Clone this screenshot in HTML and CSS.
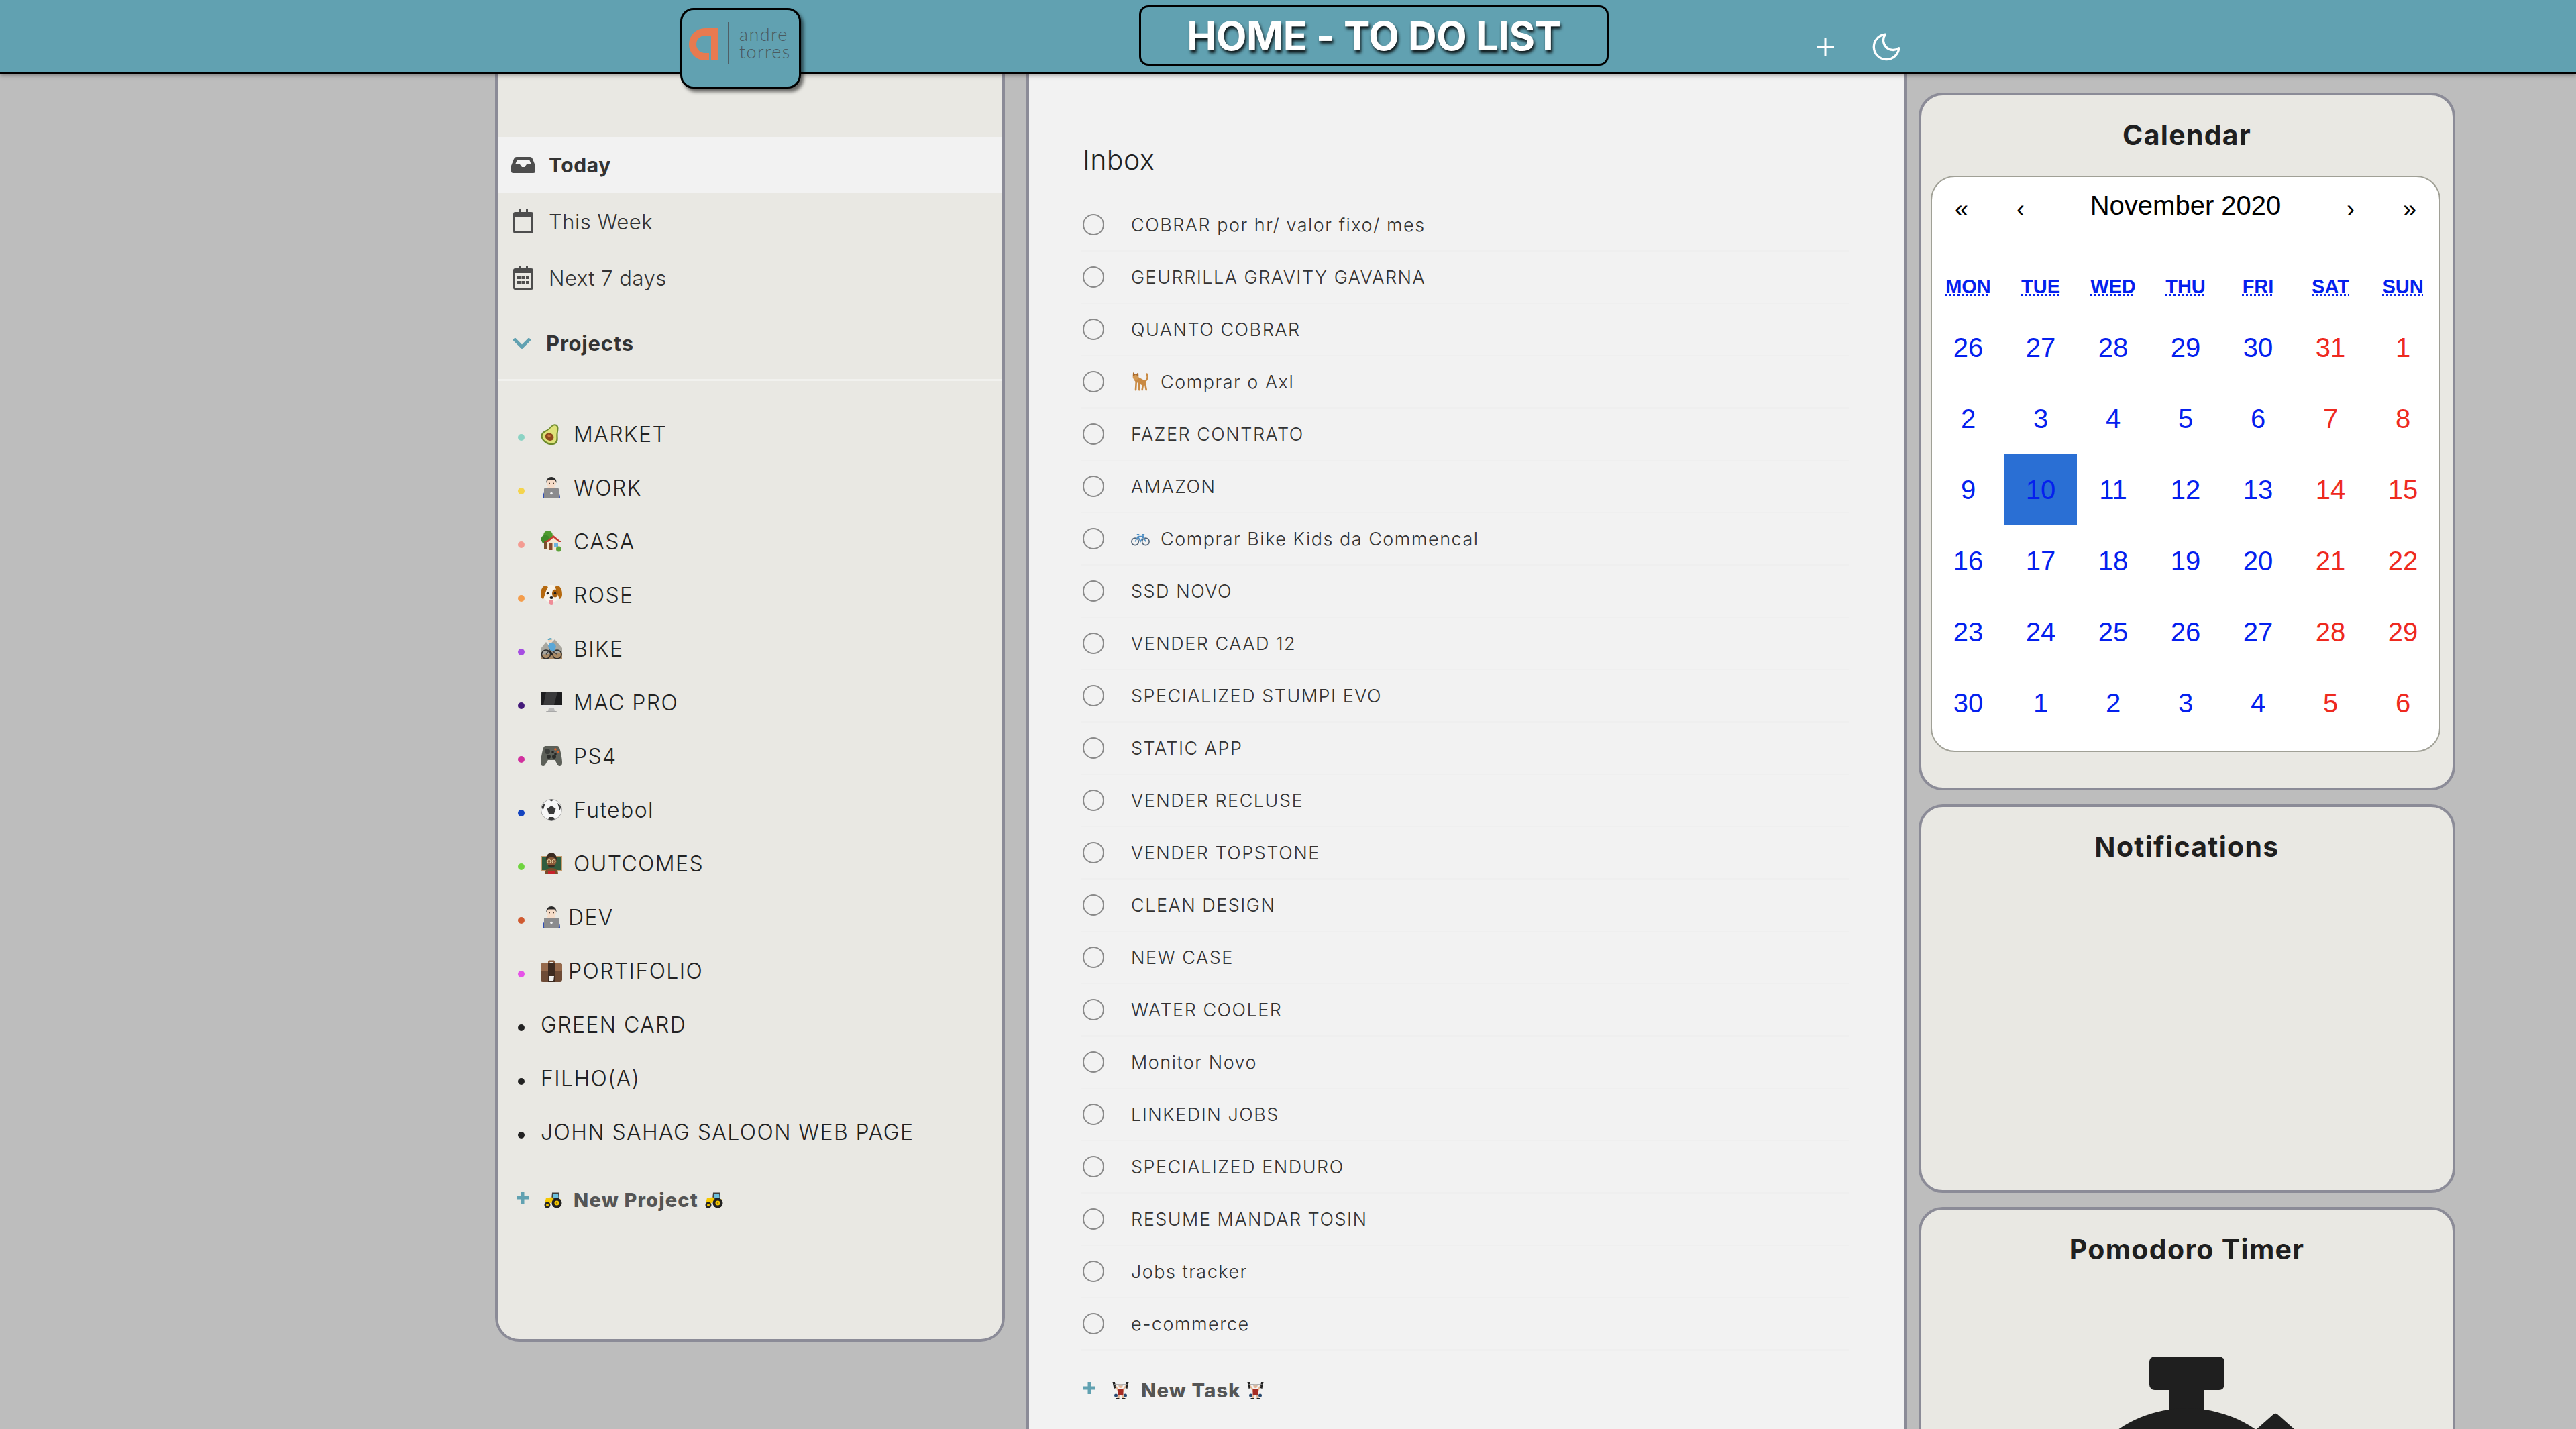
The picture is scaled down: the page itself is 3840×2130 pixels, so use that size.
FILE: index.html
```html
<!DOCTYPE html>
<html lang="en">
<head>
<meta charset="utf-8">
<title>Home - To Do List</title>
<link rel="stylesheet" href="styles.css">
</head>
<body>
<svg class="defs" aria-hidden="true">
  <symbol id="e-avocado" viewBox="0 0 32 32">
    <g transform="rotate(28 16 16) translate(16 16) scale(1.2 1) translate(-16 -16)"><path d="M16 0c4 0 5 5 6.500 10 1.500 5 4.500 8 4.500 12.500C27 28 22 32 16 32S5 28 5 22.500C5 18 8.500 15 10 10 11 5 12 0 16 0z" fill="#6d8a2c"/><path d="M16 2c3 0 4 5 5 9 1.500 5 4 7.500 4 11.500C25 27 21 29.500 16 29.500S7 27 7 22.500C7 18.500 9.500 16 11 11c1-4 2-9 5-9z" fill="#dfe27a"/><circle cx="15.500" cy="21" r="5.500" fill="#8f4a1d"/><circle cx="14.500" cy="20" r="2" fill="#c9783d"/></g>
  </symbol>
  <symbol id="e-tech" viewBox="0 0 32 32">
    <path d="M3 32c0-7 3-12 6-13h14c3 1 6 6 6 13z" fill="#2d4bb5"/>
    <circle cx="16" cy="9" r="7" fill="#f6dcc8"/>
    <path d="M8.500 9C8 3 12 0 16 0s8 3 7.500 9c-1-3-2-4.500-3.500-4.500h-8C10.500 4.500 9.500 6 8.500 9z" fill="#2a2a2a"/>
    <circle cx="13" cy="9.500" r="1" fill="#3a2a20"/><circle cx="19" cy="9.500" r="1" fill="#3a2a20"/>
    <rect x="10" y="15" width="12" height="4" fill="#f6dcc8"/>
    <rect x="5" y="17" width="22" height="15" rx="1" fill="#8b8b8d"/>
    <circle cx="16" cy="24.500" r="1.800" fill="#f2f2f2"/>
  </symbol>
  <symbol id="e-house" viewBox="0 0 32 32">
    <circle cx="11" cy="7" r="7" fill="#4f9a2f"/><circle cx="7" cy="13" r="6.500" fill="#3f8a28"/><rect x="5" y="16" width="4" height="12" fill="#7a4e2a"/>
    <rect x="10" y="16" width="18" height="13" fill="#f5e6cf"/>
    <path d="M7 17 19 7l12 10z" fill="#c7382f"/><path d="M11 17 19 10.500 27 17z" fill="#f5e6cf"/>
    <rect x="12.500" y="19" width="5" height="10" fill="#8a4a2d"/><rect x="20" y="19" width="6" height="5" fill="#6fb4df"/>
    <circle cx="27" cy="27.500" r="4" fill="#5da23a"/>
  </symbol>
  <symbol id="e-dog" viewBox="0 0 32 32">
    <ellipse cx="16" cy="14" rx="13" ry="13" fill="#f7f3ea"/>
    <path d="M7 2C2 3 0 9 0 15c0 4 2 7 4 7 2-4 3-12 7-18z" fill="#b5690f"/>
    <path d="M25 2c5 1 7 7 7 13 0 4-2 7-4 7-2-4-3-12-7-18z" fill="#b5690f"/>
    <ellipse cx="21.500" cy="13.500" rx="4.500" ry="6" fill="#a8600e"/>
    <circle cx="10.500" cy="13.500" r="1.800" fill="#1c1c1c"/><circle cx="21.500" cy="13.500" r="1.800" fill="#1c1c1c"/>
    <ellipse cx="16" cy="20" rx="2.500" ry="2" fill="#1c1c1c"/>
    <path d="M13 24h6v4a3 3 0 0 1-6 0z" fill="#ef8d98"/>
  </symbol>
  <symbol id="e-biker" viewBox="0 0 32 32">
    <path d="M0 32V16L8 6l4 5 9-9 11 13v17z" fill="#a9a79f"/><path d="M0 25l32-3v10H0z" fill="#a98a66"/>
    <circle cx="8" cy="24.500" r="6.500" fill="none" stroke="#2b2b2b" stroke-width="1.500"/><circle cx="24.500" cy="24.500" r="6.500" fill="none" stroke="#2b2b2b" stroke-width="1.500"/>
    <path d="M8 24.500 14 17l10.500 7.500" fill="none" stroke="#444" stroke-width="1.500"/>
    <path d="M13 8c3-2 8-1 10 5l-3 7-6-2-3-6z" fill="#5aa7d8"/><path d="M14 19l3 6" stroke="#222" stroke-width="2.500"/>
    <circle cx="14" cy="3.500" r="3.200" fill="#f2d3b8"/><path d="M10.500 3C11 0 16 -1 18 2z" fill="#38a0c9"/>
  </symbol>
  <symbol id="e-desktop" viewBox="0 0 32 32">
    <rect x="0" y="1" width="32" height="24" rx="1" fill="#e6e6e6"/>
    <path d="M0 1.500C0 1 .5 .5 1 .5h30c.5 0 1 .5 1 1V20H0z" fill="#1d1d1f"/><path d="M8 .5h17L20 20H4z" fill="#3a3a3c"/>
    <path d="M12 25h8l1 4h-10z" fill="#bdbdbd"/><rect x="8" y="29" width="16" height="2" rx="1" fill="#a8a8a8"/>
  </symbol>
  <symbol id="e-pad" viewBox="0 0 32 32">
    <path d="M7 1h18c2 0 3 2 4 6 2 8 3 15 3 19 0 4-2 5-4 5-3 0-5-7-7-9h-10c-2 2-4 9-7 9-2 0-4-1-4-5 0-4 1-11 3-19 1-4 2-6 4-6z" fill="#5d6059"/>
    <circle cx="10" cy="9" r="4" fill="#3b3d3a"/><circle cx="12" cy="17" r="3" fill="#2a2b29"/><circle cx="20" cy="17" r="3" fill="#2a2b29"/>
    <circle cx="22" cy="6" r="1.800" fill="#d9622a"/><circle cx="26" cy="10" r="1.800" fill="#d9622a"/><circle cx="18" cy="10" r="1.800" fill="#252525"/><circle cx="22" cy="13" r="1.800" fill="#252525"/>
  </symbol>
  <symbol id="e-ball" viewBox="0 0 32 32">
    <circle cx="16" cy="16" r="15.500" fill="#f7f7f7" stroke="#a8a8a8"/>
    <path d="M16 10l6.500 4.500-2.500 7.500h-8l-2.500-7.500z" fill="#3a3a3a"/>
    <path d="M12 1 16 3.500 20 1c-2.500-.7-5.500-.7-8 0zM1.500 12l2 5 2.500-8 1-3C4.500 7.500 2.500 9.500 1.500 12zM30.500 12l-2 5-2.500-8-1-3c2.500 1.500 4.500 3.500 5.500 6zM11 30.500l5 1 5-1-2-3.500h-6z" fill="#3a3a3a"/>
  </symbol>
  <symbol id="e-teacher" viewBox="0 0 32 32">
    <rect x="0" y="5" width="32" height="23" fill="#c69c6d"/><rect x="2" y="7" width="28" height="19" fill="#2f5d3f"/>
    <path d="M6 32c0-6 4-9 10-9s10 3 10 9z" fill="#7b4d2a"/><rect x="11" y="27" width="10" height="5" fill="#c8222a"/>
    <circle cx="16" cy="13" r="7.500" fill="#8a5a38"/><path d="M8 12C7 4 12 0 16 0s9 4 8 12c-1-3-3-5-8-5s-7 2-8 5z" fill="#3a2a20"/>
    <path d="M11 20c2 3 8 3 10 0l-1-2h-8z" fill="#3a2a20"/>
    <circle cx="12.500" cy="13" r="2.500" fill="none" stroke="#e8d8a8"/><circle cx="19.500" cy="13" r="2.500" fill="none" stroke="#e8d8a8"/>
  </symbol>
  <symbol id="e-case" viewBox="0 0 32 32">
    <path d="M11 6V2.500C11 1 12 .5 13 .5h6c1 0 2 .5 2 2V6h-2.500V3h-5v3z" fill="#8a5d3f"/>
    <rect x="0" y="5" width="32" height="27" rx="3" fill="#6d4a35"/><rect x="0" y="5" width="32" height="12" rx="3" fill="#96694b"/>
    <rect x="11" y="5" width="10" height="27" fill="#3d2a20"/>
    <path d="M12 24h8l-1 7h-6z" fill="#eeeeee"/>
  </symbol>
  <symbol id="e-animal" viewBox="0 0 32 32">
    <g fill="none" stroke="#c98a43" stroke-linecap="round">
      <path d="M10 12 21 18" stroke-width="9"/>
      <path d="M9 14 8 30M13 16l1 14M21 19l-2 11M24 19l2 11" stroke-width="3"/>
      <path d="M24 15c4-2 5-7 3-12" stroke-width="3"/>
    </g>
    <circle cx="8" cy="8" r="5" fill="#d49a55"/>
    <path d="M3 7 3.500 0 8 4zM13 7 12.500 0 8 4z" fill="#a8692b"/>
  </symbol>
  <symbol id="e-bike" viewBox="0 0 32 32">
    <circle cx="7" cy="21" r="6" fill="none" stroke="#54677b" stroke-width="1.800"/><circle cx="25" cy="21" r="6" fill="none" stroke="#54677b" stroke-width="1.800"/>
    <path d="M7 21l5-9h9l4 9M12 12l4 9 5-9M20 9l1 3M10 9h4M19 9h4" fill="none" stroke="#4f8fc4" stroke-width="1.800"/>
  </symbol>
  <symbol id="e-tractor" viewBox="0 0 27 24">
    <path d="M12 1h10l1 10H11z" fill="#3e3e3e"/><path d="M13.500 2.500h7.500l.7 7h-8z" fill="#6cc1de"/>
    <path d="M2 13l1-4 9-1 3 3h10v3H12l-5 5H2z" fill="#f5c800"/>
    <circle cx="5" cy="19.500" r="4.500" fill="#222"/><circle cx="5" cy="19.500" r="2" fill="#f5c800"/>
    <circle cx="19" cy="16.500" r="7.500" fill="#222"/><circle cx="19" cy="16.500" r="3.500" fill="#f5c800"/><circle cx="19" cy="16.500" r="1.300" fill="#a38400"/>
  </symbol>
  <symbol id="e-lifter" viewBox="0 0 26 27">
    <path d="M1 1l2 10 3-1-1.500-9zM25 1l-2 10-3-1 1.500-9z" fill="#222"/>
    <path d="M3 5h20" stroke="#999" stroke-width="1.500"/>
    <path d="M6 6l4 6h6l4-6 1 2-4 8H9L5 8z" fill="#e5b795"/>
    <circle cx="13" cy="7" r="3" fill="#e5b795"/><path d="M9.500 6.500C10 3 16 3 16.500 6.500z" fill="#b9b9b9"/>
    <rect x="9" y="11" width="8" height="9" fill="#a62c24"/>
    <path d="M9 20h3l-1 5H8zM14 20h3l1 5h-3z" fill="#e5b795"/>
    <circle cx="6" cy="21" r="2.500" fill="#2a4a70"/><circle cx="20" cy="21" r="2.500" fill="#2a4a70"/>
    <path d="M6 25h5v2H6zM15 25h5v2h-5z" fill="#222"/>
  </symbol>
</svg>

<header class="topbar">
  <a class="logo">
    <svg class="logo-mark" viewBox="0 0 44 48"><path d="M44 0H24a24 24 0 0 0 0 48h6V37h-6a13 13 0 0 1 0-26h9v37h11z" fill="#e77a50"/></svg>
    <span class="logo-rule"></span>
    <span class="logo-text"><span class="logo-line">andre</span><span class="logo-line">torres</span></span>
  </a>
  <h1 class="page-title">HOME - TO DO LIST</h1>
  <div class="top-actions">
    <svg class="icon-plus" viewBox="0 0 26 26"><path d="M13 0v26M0 13h26" stroke="#fff" stroke-width="3" fill="none"/></svg>
    <svg class="icon-moon" viewBox="0 0 24 24"><path d="M21 12.790A9 9 0 1 1 11.210 3 7 7 0 0 0 21 12.790z" fill="none" stroke="#fff" stroke-width="1.600" stroke-linejoin="round"/></svg>
  </div>
</header>

<div class="layout">
  <aside class="sidebar">
    <nav class="quick">
      <a class="quick-row is-active">
        <span class="quick-icon"><svg width="36" height="24" viewBox="0 0 36 24"><path d="M8 0h20c2 0 3 1 4 3l4 10v8c0 2-1 3-3 3H3c-2 0-3-1-3-3v-8L4 3c1-2 2-3 4-3zm1 4L6 11h7l3 4h4l3-4h7L27 4z" fill="#4d4d4d" fill-rule="evenodd"/></svg></span>
        <span>Today</span>
      </a>
      <a class="quick-row">
        <span class="quick-icon"><svg width="30" height="36" viewBox="0 0 30 36"><path d="M8 0h3v4h8V0h3v4h5c2 0 3 1 3 3v26c0 2-1 3-3 3H3c-2 0-3-1-3-3V7c0-2 1-3 3-3h5zM3 11v22h24V11z" fill="#4d4d4d" fill-rule="evenodd"/></svg></span>
        <span>This Week</span>
      </a>
      <a class="quick-row">
        <span class="quick-icon"><svg width="30" height="36" viewBox="0 0 30 36"><path d="M8 0h3v4h8V0h3v4h5c2 0 3 1 3 3v26c0 2-1 3-3 3H3c-2 0-3-1-3-3V7c0-2 1-3 3-3h5zM3 11v22h24V11z" fill="#4d4d4d" fill-rule="evenodd"/><path d="M6 15h5v5H6zM12.500 15h5v5h-5zM19 15h5v5h-5zM6 23h5v5H6zM12.500 23h5v5h-5zM19 23h5v5h-5z" fill="#4d4d4d"/></svg></span>
        <span>Next 7 days</span>
      </a>
    </nav>
    <div class="projects-head">
      <svg class="chevron" viewBox="0 0 28 16"><path d="M2 1l12 12L26 1" fill="none" stroke="#61a1b1" stroke-width="5"/></svg>
      <span>Projects</span>
    </div>
    <ul class="project-list">
      <li><i class="dot c1"></i><svg class="emoji"><use href="#e-avocado"/></svg><span class="gap">MARKET</span></li>
      <li><i class="dot c2"></i><svg class="emoji"><use href="#e-tech"/></svg><span class="gap">WORK</span></li>
      <li><i class="dot c3"></i><svg class="emoji"><use href="#e-house"/></svg><span class="gap">CASA</span></li>
      <li><i class="dot c4"></i><svg class="emoji"><use href="#e-dog"/></svg><span class="gap">ROSE</span></li>
      <li><i class="dot c5"></i><svg class="emoji"><use href="#e-biker"/></svg><span class="gap">BIKE</span></li>
      <li><i class="dot c6"></i><svg class="emoji"><use href="#e-desktop"/></svg><span class="gap">MAC PRO</span></li>
      <li><i class="dot c7"></i><svg class="emoji"><use href="#e-pad"/></svg><span class="gap">PS4</span></li>
      <li><i class="dot c8"></i><svg class="emoji"><use href="#e-ball"/></svg><span class="gap">Futebol</span></li>
      <li><i class="dot c9"></i><svg class="emoji"><use href="#e-teacher"/></svg><span class="gap">OUTCOMES</span></li>
      <li><i class="dot c10"></i><svg class="emoji"><use href="#e-tech"/></svg><span class="gap-sm">DEV</span></li>
      <li><i class="dot c11"></i><svg class="emoji"><use href="#e-case"/></svg><span class="gap-sm">PORTIFOLIO</span></li>
      <li><i class="dot"></i><span>GREEN CARD</span></li>
      <li><i class="dot"></i><span>FILHO(A)</span></li>
      <li><i class="dot"></i><span>JOHN SAHAG SALOON WEB PAGE</span></li>
    </ul>
    <a class="add-row add-project">
      <svg class="add-plus" viewBox="0 0 18 18"><path d="M9 0v18M0 9h18" stroke="#61a1b1" stroke-width="5"/></svg>
      <svg class="emoji-add"><use href="#e-tractor"/></svg>
      <span>New Project</span>
      <svg class="emoji-add"><use href="#e-tractor"/></svg>
    </a>
  </aside>

  <main class="inbox">
    <h2 class="inbox-title">Inbox</h2>
    <ul class="task-list">
      <li><i class="radio"></i><span>COBRAR por hr/ valor fixo/ mes</span></li>
      <li><i class="radio"></i><span>GEURRILLA GRAVITY GAVARNA</span></li>
      <li><i class="radio"></i><span>QUANTO COBRAR</span></li>
      <li><i class="radio"></i><svg class="emoji-task"><use href="#e-animal"/></svg><span>Comprar o Axl</span></li>
      <li><i class="radio"></i><span>FAZER CONTRATO</span></li>
      <li><i class="radio"></i><span>AMAZON</span></li>
      <li><i class="radio"></i><svg class="emoji-task"><use href="#e-bike"/></svg><span>Comprar Bike Kids da Commencal</span></li>
      <li><i class="radio"></i><span>SSD NOVO</span></li>
      <li><i class="radio"></i><span>VENDER CAAD 12</span></li>
      <li><i class="radio"></i><span>SPECIALIZED STUMPI EVO</span></li>
      <li><i class="radio"></i><span>STATIC APP</span></li>
      <li><i class="radio"></i><span>VENDER RECLUSE</span></li>
      <li><i class="radio"></i><span>VENDER TOPSTONE</span></li>
      <li><i class="radio"></i><span>CLEAN DESIGN</span></li>
      <li><i class="radio"></i><span>NEW CASE</span></li>
      <li><i class="radio"></i><span>WATER COOLER</span></li>
      <li><i class="radio"></i><span>Monitor Novo</span></li>
      <li><i class="radio"></i><span>LINKEDIN JOBS</span></li>
      <li><i class="radio"></i><span>SPECIALIZED ENDURO</span></li>
      <li><i class="radio"></i><span>RESUME MANDAR TOSIN</span></li>
      <li><i class="radio"></i><span>Jobs tracker</span></li>
      <li><i class="radio"></i><span>e-commerce</span></li>
    </ul>
    <a class="add-row add-task">
      <svg class="add-plus" viewBox="0 0 18 18"><path d="M9 0v18M0 9h18" stroke="#61a1b1" stroke-width="5"/></svg>
      <svg class="emoji-add"><use href="#e-lifter"/></svg>
      <span>New Task</span>
      <svg class="emoji-add"><use href="#e-lifter"/></svg>
    </a>
  </main>

  <section class="widgets">
    <div class="card card-calendar">
      <h3 class="card-title">Calendar</h3>
      <div class="calendar">
        <div class="cal-nav">
          <button class="cal-arrow">«</button>
          <button class="cal-arrow">‹</button>
          <span class="cal-label">November 2020</span>
          <button class="cal-arrow">›</button>
          <button class="cal-arrow">»</button>
        </div>
        <div class="cal-grid">
          <abbr class="wd">MON</abbr><abbr class="wd">TUE</abbr><abbr class="wd">WED</abbr><abbr class="wd">THU</abbr><abbr class="wd">FRI</abbr><abbr class="wd">SAT</abbr><abbr class="wd">SUN</abbr>
          <span>26</span><span>27</span><span>28</span><span>29</span><span>30</span><span class="we">31</span><span class="we">1</span>
          <span>2</span><span>3</span><span>4</span><span>5</span><span>6</span><span class="we">7</span><span class="we">8</span>
          <span>9</span><span class="today">10</span><span>11</span><span>12</span><span>13</span><span class="we">14</span><span class="we">15</span>
          <span>16</span><span>17</span><span>18</span><span>19</span><span>20</span><span class="we">21</span><span class="we">22</span>
          <span>23</span><span>24</span><span>25</span><span>26</span><span>27</span><span class="we">28</span><span class="we">29</span>
          <span>30</span><span>1</span><span>2</span><span>3</span><span>4</span><span class="we">5</span><span class="we">6</span>
        </div>
      </div>
    </div>
    <div class="card card-notes">
      <h3 class="card-title">Notifications</h3>
    </div>
    <div class="card card-pomodoro">
      <h3 class="card-title">Pomodoro Timer</h3>
      <svg class="stopwatch" viewBox="0 0 400 440"><rect x="144" y="0" width="112" height="50" rx="8" fill="#1f1f1f"/><rect x="174" y="40" width="51" height="50" fill="#1f1f1f"/><circle cx="200" cy="259" r="182" fill="#1f1f1f"/><path d="M332 90 306 113 358 113z" fill="#1f1f1f" stroke="#1f1f1f" stroke-width="10" stroke-linejoin="round"/><path d="M300 130l60 0 0 60-60 0z" fill="#1f1f1f"/></svg>
    </div>
  </section>
</div>
</body>
</html>
```

FILE: styles.css
```css
* { box-sizing: border-box; }
html, body { margin: 0; padding: 0; }
body {
  width: 3840px;
  height: 2130px;
  overflow: hidden;
  background: #bdbdbd;
  font-family: Inter, "Liberation Sans", sans-serif;
  color: #222;
}
.defs { display: none; }
ul { list-style: none; margin: 0; padding: 0; }
h1, h2, h3 { margin: 0; }

/* Top bar */
.topbar {
  position: relative;
  z-index: 2;
  display: flex;
  align-items: flex-start;
  height: 110px;
  padding-left: 1014px;
  background: #61a1b1;
  border-bottom: 3px solid #000;
  box-shadow: 0 3px 6px rgba(0,0,0,.3);
}
.logo {
  display: flex;
  align-items: flex-start;
  flex: none;
  width: 180px;
  height: 120px;
  margin-top: 12px;
  padding: 27px 0 0 10px;
  background: #61a1b1;
  border: 3px solid #000;
  border-radius: 20px;
  box-shadow: 4px 5px 5px rgba(0,0,0,.55);
}
.logo-mark { width: 44px; height: 48px; flex: none; }
.logo-rule { width: 2px; height: 62px; margin: -9px 0 0 14px; background: #4f5f66; flex: none; }
.logo-text {
  display: flex;
  flex-direction: column;
  margin: -4px 0 0 15px;
  font-family: Lato, sans-serif;
  font-weight: 300;
  font-size: 27px;
  color: #4a5a61;
  letter-spacing: 1.4px;
}
.logo-line { display: block; height: 26px; line-height: 26px; }
.page-title {
  display: flex;
  align-items: center;
  justify-content: center;
  flex: none;
  width: 700px;
  height: 90px;
  margin: 8px 0 0 504px;
  border: 3px solid #000;
  border-radius: 14px;
  font-size: 59px;
  font-weight: 700;
  letter-spacing: -.3px;
  color: #fff;
  text-shadow: 2px 4px 4px rgba(0,0,0,.85);
}
.top-actions { display: flex; align-items: center; margin: 45px 0 0 310px; }
.icon-plus { width: 26px; height: 26px; flex: none; }
.icon-moon { width: 50px; height: 50px; margin-left: 53px; flex: none; }

/* Columns */
.layout {
  display: flex;
  align-items: flex-start;
  height: 2020px;
  padding-left: 738px;
  overflow: hidden;
}
.sidebar {
  flex: none;
  width: 760px;
  height: 1890px;
  padding-top: 94px;
  background: #e9e8e3;
  border: 4px solid #8b8b97;
  border-top: 0;
  border-radius: 0 0 36px 36px;
}
.quick-row {
  display: flex;
  align-items: center;
  height: 84px;
  padding-left: 20px;
  font-size: 31px;
  font-weight: 300;
  letter-spacing: .5px;
  color: #333;
}
.quick-row.is-active { background: #f2f2f2; font-size: 30px; font-weight: 700; letter-spacing: .6px; }
.quick-icon { display: flex; justify-content: center; align-items: center; width: 36px; margin-right: 20px; }
.projects-head {
  display: flex;
  align-items: center;
  height: 112px;
  padding: 2px 0 0 22px;
  border-bottom: 3px solid #f1f1ee;
  font-size: 31px;
  font-weight: 700;
  letter-spacing: .8px;
  color: #333;
}
.chevron { width: 28px; height: 16px; margin-right: 22px; }
.project-list { padding-top: 39px; }
.project-list li {
  display: flex;
  align-items: center;
  height: 80px;
  padding-left: 30px;
  font-size: 32px;
  font-weight: 300;
  letter-spacing: 1.4px;
  color: #222;
}
.dot {
  flex: none;
  width: 10px;
  height: 10px;
  margin: 10px 24px 0 0;
  border-radius: 50%;
  background: #222;
}
.c1 { background: #8bd3c4; }
.c2 { background: #f4d44d; }
.c3 { background: #f49b92; }
.c4 { background: #f49d4c; }
.c5 { background: #a64de2; }
.c6 { background: #441a7a; }
.c7 { background: #d1309e; }
.c8 { background: #1444c0; }
.c9 { background: #6fd43f; }
.c10 { background: #d05a30; }
.c11 { background: #e653e8; }
.emoji { flex: none; width: 32px; height: 32px; }
.gap { margin-left: 17px; }
.gap-sm { margin-left: 9px; }

.add-row {
  display: flex;
  align-items: center;
  height: 40px;
  font-size: 29px;
  font-weight: 800;
  letter-spacing: 1.2px;
  color: #555;
}
.add-plus { flex: none; width: 18px; height: 18px; margin-top: -6px; }
.emoji-add { flex: none; width: 27px; height: 27px; }
.add-project { margin: 41px 0 0 28px; }
.add-project .emoji-add:nth-of-type(2) { margin: 0 17px 0 23px; }
.add-project .emoji-add:last-child { margin-left: 10px; }
.add-task { margin: 39px 0 0 3px; }
.add-task .emoji-add:nth-of-type(2) { margin: 0 17px 0 24px; }
.add-task .emoji-add:last-child { margin-left: 8px; }

/* Inbox */
.inbox {
  flex: none;
  width: 1312px;
  height: 2020px;
  margin-left: 32px;
  padding: 88px 81px 0 78px;
  background: #f2f2f2;
  border-left: 4px solid #8b8b97;
  border-right: 4px solid #8b8b97;
}
.inbox-title {
  height: 80px;
  margin-bottom: 19px;
  padding-left: 2px;
  font-size: 41px;
  line-height: 80px;
  font-weight: 300;
  letter-spacing: .5px;
  color: #222;
}
.task-list li {
  display: flex;
  align-items: center;
  height: 78px;
  padding-left: 2px;
  border-bottom: 2px solid #efefef;
  font-size: 27px;
  font-weight: 300;
  letter-spacing: 1.5px;
  color: #333;
}
.radio {
  flex: none;
  width: 32px;
  height: 32px;
  margin-right: 40px;
  border: 2px solid #8a8a8a;
  border-radius: 50%;
}
.emoji-task { flex: none; width: 28px; height: 28px; margin-right: 16px; }

/* Widgets */
.widgets {
  flex: none;
  display: flex;
  flex-direction: column;
  gap: 21px;
  width: 800px;
  margin-left: 18px;
  padding-top: 28px;
}
.card {
  flex: none;
  background: #e9e8e3;
  border: 4px solid #8b8b97;
  border-radius: 36px;
}
.card-calendar { height: 1040px; padding: 0 14px; }
.card-notes { height: 579px; }
.card-pomodoro { height: 760px; }
.card-title {
  display: flex;
  align-items: center;
  justify-content: center;
  height: 118px;
  font-size: 41px;
  font-weight: 700;
  letter-spacing: 1.3px;
  color: #1f1f1f;
}
.calendar {
  width: 760px;
  margin-top: 2px;
  background: #fff;
  border: 2px solid #a0a096;
  border-radius: 36px;
  padding-bottom: 18px;
  font-family: "Liberation Sans", Arial, sans-serif;
}
.cal-nav { display: flex; align-items: center; height: 88px; }
.cal-arrow {
  flex: none;
  width: 88px;
  height: 88px;
  padding: 8px 0 0;
  background: none;
  border: 0;
  font-family: inherit;
  font-size: 36px;
  color: #000;
}
.cal-label { flex: 1; text-align: center; font-size: 40px; color: #000; margin-top: -4px; }
.cal-grid {
  display: grid;
  grid-template-columns: repeat(7, 108px);
  grid-template-rows: 113px repeat(6, 106px);
  font-size: 40px;
  color: #0420ee;
}
.cal-grid span { display: flex; align-items: center; justify-content: center; }
.cal-grid .we { color: #ee2a1e; }
.cal-grid .today { background: #2a6fd4; }
.wd {
  display: flex;
  align-items: center;
  justify-content: center;
  padding-top: 37px;
  font-size: 29px;
  font-weight: 700;
  text-decoration: underline dotted;
}
.stopwatch { display: block; width: 400px; height: 440px; margin: 101px auto 0; }
```
